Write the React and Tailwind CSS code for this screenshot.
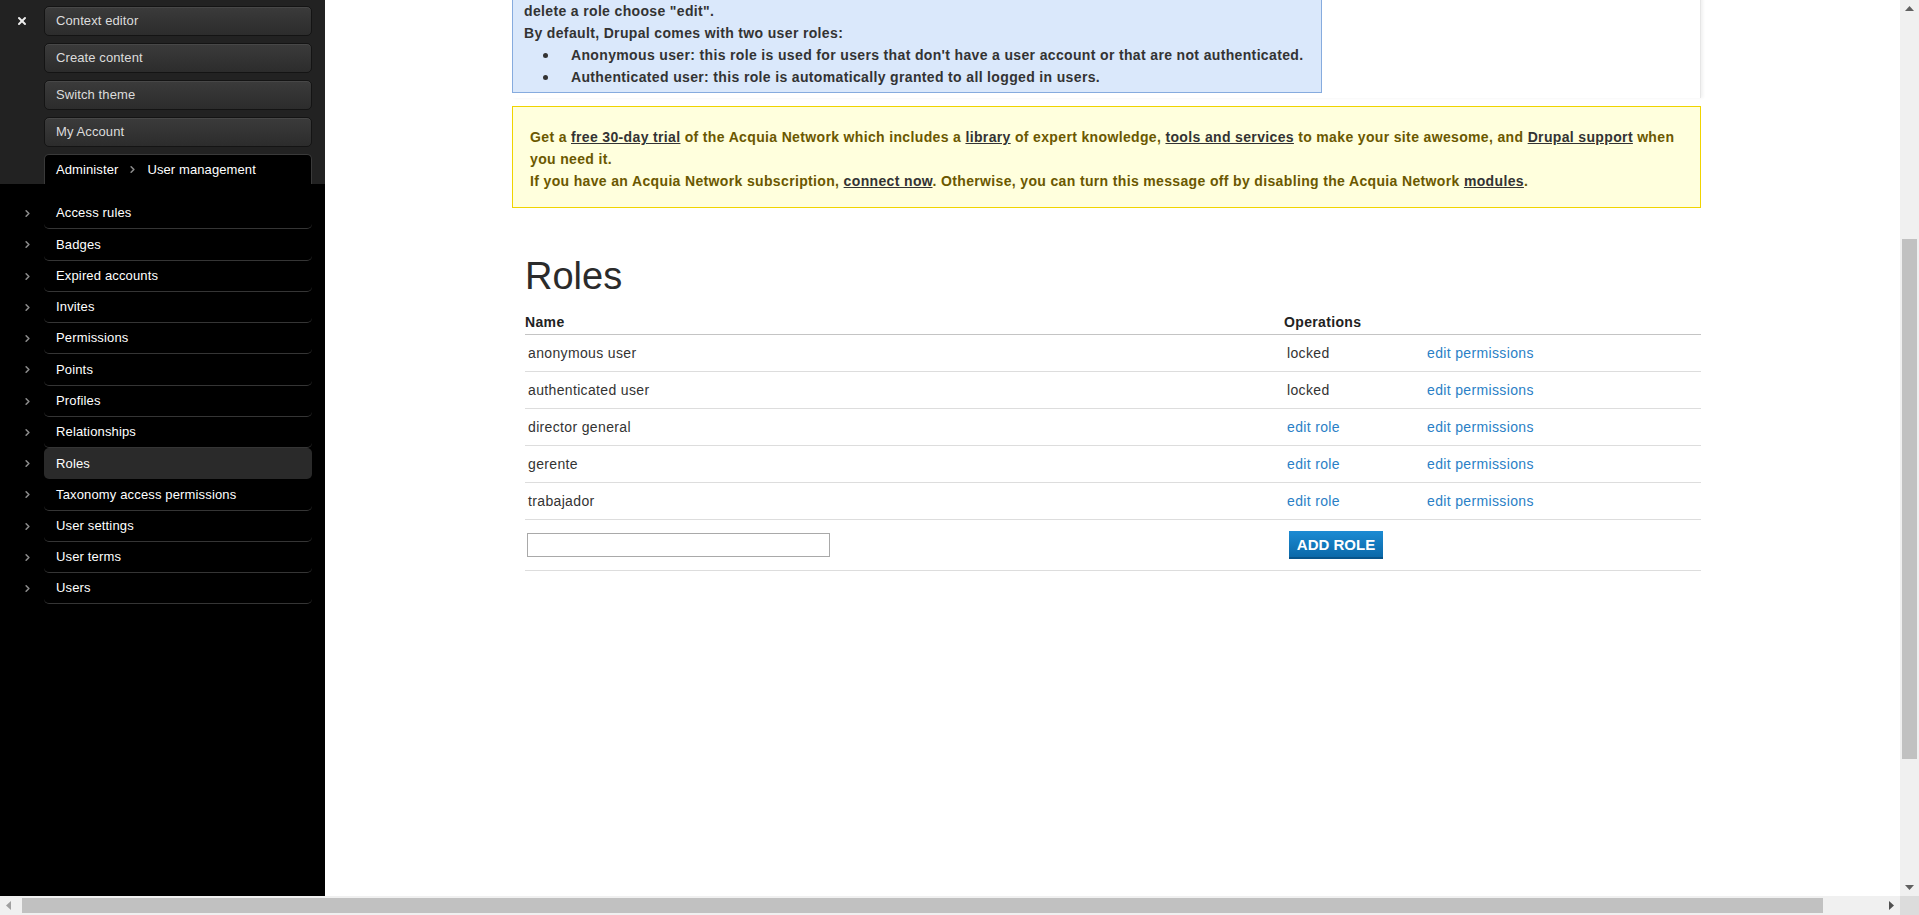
import React from "react";
import { ChevronRight, X } from "lucide-react";

const topButtons = ["Context editor", "Create content", "Switch theme", "My Account"];
const items = [
  "Access rules",
  "Badges",
  "Expired accounts",
  "Invites",
  "Permissions",
  "Points",
  "Profiles",
  "Relationships",
  "Roles",
  "Taxonomy access permissions",
  "User settings",
  "User terms",
  "Users",
];
const roles = [
  { name: "anonymous user", locked: true },
  { name: "authenticated user", locked: true },
  { name: "director general", locked: false },
  { name: "gerente", locked: false },
  { name: "trabajador", locked: false },
];

function Sidebar() {
  return (
    <aside className="w-[325px] shrink-0 bg-black flex flex-col font-['Liberation_Sans',Arial,sans-serif]">
      <div className="h-[184px] bg-[#222] flex">
        <div className="w-[44px] flex justify-center pt-[15px]">
          <X size={12} strokeWidth={4} color="#eeeeee" />
        </div>
        <div className="w-[268px] flex flex-col pt-[6px] gap-[7px]">
          {topButtons.map((b) => (
            <div
              key={b}
              className="h-[30px] rounded-[5px] border border-[#141414] bg-gradient-to-b from-[#3b3b3b] to-[#2c2c2c] shadow-[inset_0_1px_0_rgba(255,255,255,0.07)] flex items-center pl-[11px] text-[13px] tracking-[0.1px] text-[#dcdcdc]"
            >
              {b}
            </div>
          ))}
          <div className="h-[30px] rounded-t-[5px] border border-b-0 border-[#3a3a3a] bg-black flex items-center pl-[11px] text-[13px] tracking-[0.1px] text-white">
            <span>Administer</span>
            <ChevronRight size={11} strokeWidth={3.5} color="#8a8a8a" className="mx-[9px]" />
            <span>User management</span>
          </div>
        </div>
      </div>
      <nav className="pt-[14px] flex flex-col">
        {items.map((it) => {
          const active = it === "Roles";
          return (
            <div key={it} className="flex h-[31.25px]">
              <div className="w-[44px] flex items-center pl-[22px]">
                <ChevronRight size={11} strokeWidth={3.5} color="#8a8a8a" />
              </div>
              <div
                className={
                  active
                    ? "w-[268px] rounded-[5px] bg-[#2a2a2a] flex items-center pl-[12px] text-[13px] tracking-[0.15px] text-white"
                    : "w-[268px] rounded-b-[5px] border-b border-[#353535] flex items-center pl-[12px] text-[13px] tracking-[0.15px] text-white"
                }
              >
                {it}
              </div>
            </div>
          );
        })}
      </nav>
    </aside>
  );
}

function Bullet({ children }) {
  return (
    <li className="flex">
      <span className="w-[47px] shrink-0 flex items-center">
        <span className="ml-[19px] w-[5px] h-[5px] rounded-full bg-[#333]" />
      </span>
      <span>{children}</span>
    </li>
  );
}

function Content() {
  return (
    <main className="flex-1 overflow-hidden bg-white font-['Liberation_Sans',Arial,sans-serif] text-[#333]">
      <div className="pl-[187px]">
        <div className="w-[1189px]">
          <div className="-mt-[12px] pb-[5px] border-r border-[#e6e6e6] shadow-[2px_0_3px_rgba(0,0,0,0.06)]">
            <div className="w-[810px] bg-[#dae8fb] border border-[#86abde] pt-[11px] pb-[4px] pl-[11px] text-[14px] tracking-[0.35px] font-bold leading-[22px] text-[#333]">
              <p>delete a role choose "edit".</p>
              <p>By default, Drupal comes with two user roles:</p>
              <ul>
                <Bullet>Anonymous user: this role is used for users that don't have a user account or that are not authenticated.</Bullet>
                <Bullet>Authenticated user: this role is automatically granted to all logged in users.</Bullet>
              </ul>
            </div>
          </div>
          <div className="mt-[8px] bg-[#ffffdd] border border-[#f0d400] pt-[19px] pb-[15px] pl-[17px] text-[14px] tracking-[0.35px] font-bold leading-[22px] text-[#6b5800] whitespace-nowrap">
            <p>
              Get a <span className="underline text-[#333]">free 30-day trial</span> of the Acquia Network which includes a{" "}
              <span className="underline text-[#333]">library</span> of expert knowledge,{" "}
              <span className="underline text-[#333]">tools and services</span> to make your site awesome, and{" "}
              <span className="underline text-[#333]">Drupal support</span> when
              <br />
              you need it.
            </p>
            <p>
              If you have an Acquia Network subscription, <span className="underline text-[#333]">connect now</span>. Otherwise,
              you can turn this message off by disabling the Acquia Network{" "}
              <span className="underline text-[#333]">modules</span>.
            </p>
          </div>

          <h1 className="mt-[49px] ml-[13px] text-[38px] leading-[38px] font-normal text-[#2b2b2b]">Roles</h1>

          <div className="mt-[19px] ml-[13px] w-[1176px] text-[14px] tracking-[0.35px]">
            <div className="grid grid-cols-[759px_1fr] border-b border-[#c4c4c4] pb-[4px] leading-[16px] font-bold text-[#222]">
              <div>Name</div>
              <div>Operations</div>
            </div>
            {roles.map((r) => (
              <div key={r.name} className="grid grid-cols-[759px_140px_1fr] h-[37px] border-b border-[#dddddd] items-center">
                <div className="pl-[3px] text-[#333]">{r.name}</div>
                <div className="pl-[3px]">
                  {r.locked ? <span className="text-[#333]">locked</span> : <span className="text-[#2a7fc6]">edit role</span>}
                </div>
                <div className="pl-[3px] text-[#2a7fc6]">edit permissions</div>
              </div>
            ))}
            <div className="grid grid-cols-[759px_1fr] h-[51px] border-b border-[#dddddd] items-center">
              <div className="pl-[2px]">
                <input
                  type="text"
                  className="block w-[303px] h-[24px] border border-[#a9a9a9] bg-white outline-none"
                />
              </div>
              <div className="pl-[5px]">
                <button className="w-[94px] h-[28px] bg-gradient-to-b from-[#1c8bd3] to-[#0b69a9] border-b-2 border-[#08548a] text-white font-bold text-[15px] tracking-normal leading-none">
                  ADD ROLE
                </button>
              </div>
            </div>
          </div>
        </div>
      </div>
    </main>
  );
}

function VScroll() {
  return (
    <div className="w-[19px] shrink-0 bg-[#f0f0f0] flex flex-col">
      <div className="h-[17px] flex items-center justify-center">
        <svg width="9" height="5" viewBox="0 0 9 5">
          <polygon points="0,5 4.5,0 9,5" fill="#606060" />
        </svg>
      </div>
      <div className="flex-1 flex flex-col">
        <div className="mt-[222px] h-[520px] mx-[2px] bg-[#c1c1c1]" />
        <div className="flex-1" />
      </div>
      <div className="h-[17px] flex items-center justify-center">
        <svg width="9" height="5" viewBox="0 0 9 5">
          <polygon points="0,0 9,0 4.5,5" fill="#606060" />
        </svg>
      </div>
    </div>
  );
}

function HScroll() {
  return (
    <div className="h-[19px] flex bg-[#f0f0f0]">
      <div className="w-[17px] flex items-center justify-center">
        <svg width="5" height="9" viewBox="0 0 5 9">
          <polygon points="5,0 0,4.5 5,9" fill="#a0a0a0" />
        </svg>
      </div>
      <div className="flex-1 flex items-stretch py-[2px]">
        <div className="ml-[5px] w-[1801px] bg-[#c1c1c1]" />
      </div>
      <div className="w-[17px] flex items-center justify-center">
        <svg width="5" height="9" viewBox="0 0 5 9">
          <polygon points="0,0 5,4.5 0,9" fill="#505050" />
        </svg>
      </div>
      <div className="w-[19px] bg-[#dcdcdc]" />
    </div>
  );
}

export default function App() {
  return (
    <div className="w-[1919px] h-[915px] overflow-hidden flex flex-col bg-white">
      <div className="flex h-[896px]">
        <Sidebar />
        <Content />
        <VScroll />
      </div>
      <HScroll />
    </div>
  );
}
